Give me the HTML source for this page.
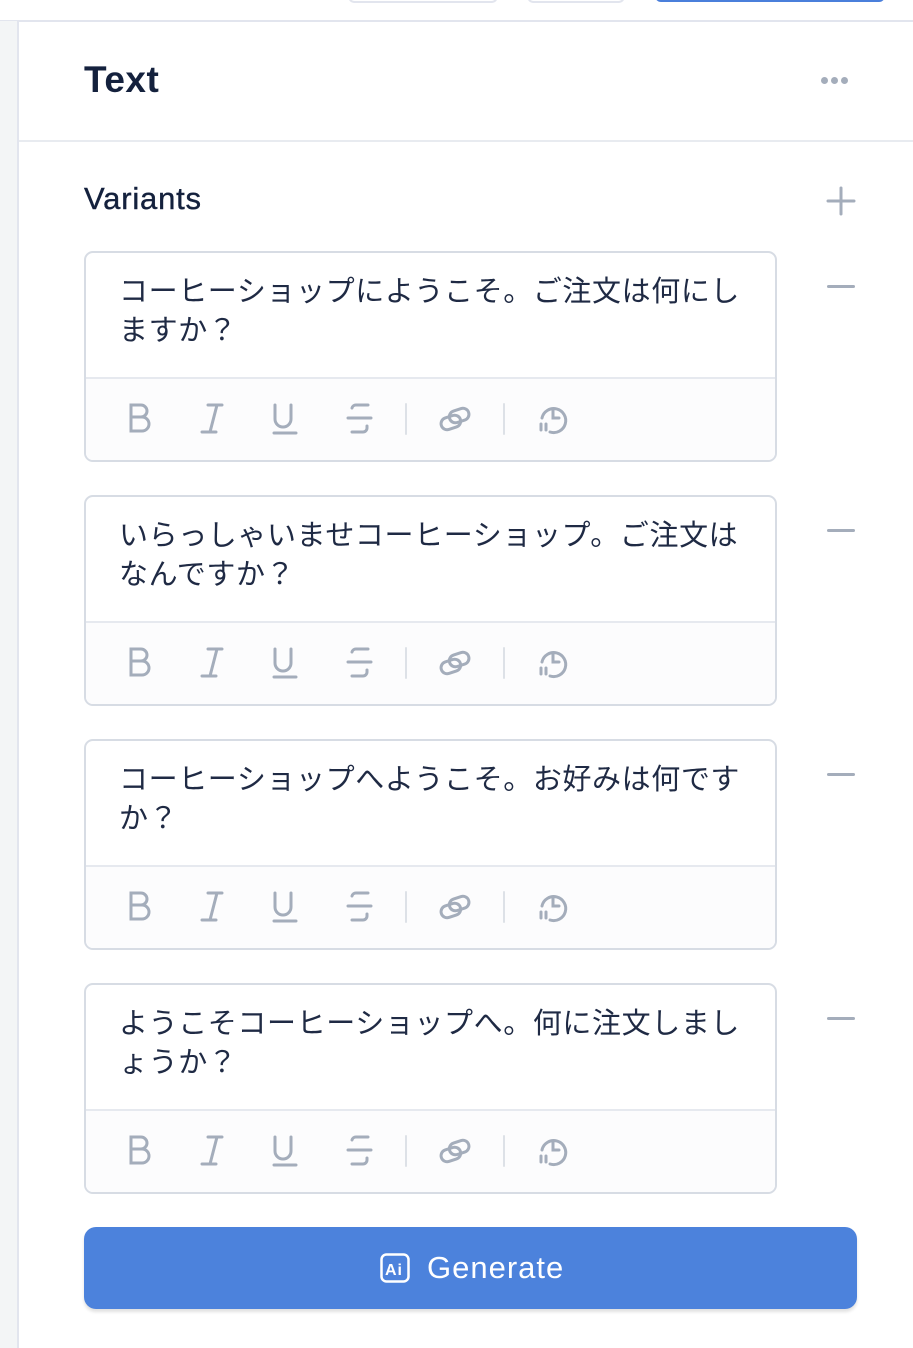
<!DOCTYPE html>
<html><head><meta charset="utf-8"><style>
*{box-sizing:border-box;margin:0;padding:0}
body{width:913px;height:1348px;background:#fff;position:relative;overflow:hidden;font-family:"Liberation Sans","Noto Sans CJK JP",sans-serif}
.side{position:absolute;left:0;top:21px;width:19px;bottom:0;background:#f3f5f6;border-right:2px solid #e2e5ee}
.topline{position:absolute;left:0;right:0;top:20px;height:2px;background:#e2e5ee}
.hdr{position:absolute;left:19px;right:0;top:140px;height:2px;background:#e8ebf0}
.title{position:absolute;left:84px;top:59px;font-size:37px;font-weight:bold;color:#14213d;letter-spacing:0.5px}
.dots{position:absolute;left:821px;top:77px}
.dots i{display:inline-block;width:7px;height:7px;border-radius:50%;background:#a4adbb;margin-right:3px;vertical-align:top}
.var{position:absolute;left:84px;top:181px;font-size:31px;color:#14213d;letter-spacing:0.8px;-webkit-text-stroke:0.4px #14213d}
.card{position:absolute;left:84px;width:693px;height:211px;border:2px solid #d7dce4;border-radius:9px;overflow:hidden}
.card .t{height:126px;padding:20px 20px 0 33px;font-size:29px;line-height:39px;color:#1f2a44;border-bottom:2px solid #e6e9ef;letter-spacing:0.6px}
.card .tb{height:83px;background:#fcfcfd;position:relative}
.tb svg{position:absolute;top:-2px;left:-2px}
.minus{position:absolute;left:827px;width:28px;height:3px;background:#a4adbb;border-radius:2px}
.gen{position:absolute;left:84px;top:1227px;width:773px;height:82px;background:#4c82dc;border-radius:12px;box-shadow:0 3px 3px rgba(0,0,0,.12);color:#fff;font-size:31px;letter-spacing:1px}
</style></head><body>
<div style="position:absolute;left:348px;top:-10px;width:150px;height:13px;border:2px solid #e2e5ee;border-radius:10px"></div>
<div style="position:absolute;left:527px;top:-10px;width:98px;height:13px;border:2px solid #e2e5ee;border-radius:10px"></div>
<div style="position:absolute;left:655px;top:-10px;width:230px;height:12px;background:#4a7fdb;border-radius:8px"></div>
<div class="topline"></div>
<div class="side"></div>
<div class="title">Text</div>
<div class="dots"><i></i><i></i><i></i></div>
<div class="hdr"></div>
<div class="var">Variants</div>
<svg style="position:absolute;left:826px;top:186px" width="30" height="30"><path d="M15 2v26M2 15h26" stroke="#a4adbb" stroke-width="3" stroke-linecap="round"/></svg>

<div class="card" style="top:251px"><div class="t">コーヒーショップにようこそ。ご注文は何にしますか？</div><div class="tb">TB</div></div>
<div class="minus" style="top:285px"></div>
<div class="card" style="top:495px"><div class="t">いらっしゃいませコーヒーショップ。ご注文は<br>なんですか？</div><div class="tb">TB</div></div>
<div class="minus" style="top:529px"></div>
<div class="card" style="top:739px"><div class="t">コーヒーショップへようこそ。お好みは何です<br>か？</div><div class="tb">TB</div></div>
<div class="minus" style="top:773px"></div>
<div class="card" style="top:983px"><div class="t">ようこそコーヒーショップへ。何に注文しまし<br>ょうか？</div><div class="tb">TB</div></div>
<div class="minus" style="top:1017px"></div>

<div class="gen">
<svg style="position:absolute;left:296px;top:26px" width="30" height="30"><rect x="1.5" y="1.5" width="27" height="27" rx="5" fill="none" stroke="#fff" stroke-width="2.5"/><text x="5" y="22" font-family="Liberation Sans" font-weight="bold" font-size="16" fill="#fff">Ai</text></svg>
<span style="position:absolute;left:343px;top:23px">Generate</span>
</div>
<script>
var svg='<svg width="693" height="83" fill="none" stroke="#a4adbb" stroke-width="3" stroke-linecap="round"><path d="M47 28h10a6 6 0 0 1 0 12H47zM47 40h11a7 7 0 0 1 0 14H47z"/><path d="M124 28h14M118 55h14M133 28l-7 27"/><path d="M191 28v14a8 8 0 0 0 16 0V28M190 56h22"/><path d="M264 41h23M268 31a4 4 0 0 1 4-3h12M268 55h11a4 4 0 0 0 4-4v-2"/><path d="M322 27v30M420 27v30" stroke="#dde1e7" stroke-width="2"/><g transform="rotate(-18 371 42)"><rect x="356" y="38" width="20" height="12" rx="6"/><rect x="366" y="34" width="20" height="12" rx="6"/></g><path d="M457 47v6M462 47v6M458 41a12 12 0 1 1 8 14" /><path d="M469 33v8h6"/></svg>';
document.querySelectorAll('.tb').forEach(function(e){e.innerHTML=svg});
</script>
</body></html>
